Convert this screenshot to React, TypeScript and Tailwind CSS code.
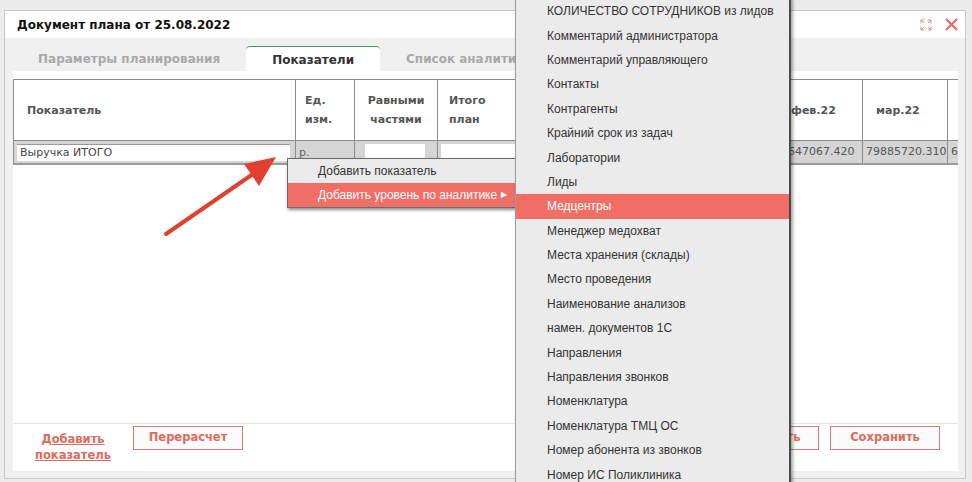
import { FC, ReactNode } from "react";

const analytics = [
  "КОЛИЧЕСТВО СОТРУДНИКОВ из лидов",
  "Комментарий администратора",
  "Комментарий управляющего",
  "Контакты",
  "Контрагенты",
  "Крайний срок из задач",
  "Лаборатории",
  "Лиды",
  "Медцентры",
  "Менеджер медохват",
  "Места хранения (склады)",
  "Место проведения",
  "Наименование анализов",
  "намен. документов 1С",
  "Направления",
  "Направления звонков",
  "Номенклатура",
  "Номенклатура ТМЦ ОС",
  "Номер абонента из звонков",
  "Номер ИС Поликлиника",
];

// columns hidden behind the submenu carry no label
const months = [
  { label: "", value: "" },
  { label: "", value: "" },
  { label: "", value: "" },
  { label: "фев.22", value: "6647067.420" },
  { label: "мар.22", value: "79885720.310" },
  { label: "", value: "66012345.000" },
];

const HeadCell: FC<{ className: string; children?: ReactNode }> = ({ className, children }) => (
  <div className={`flex h-full shrink-0 items-center border-r border-[#8c8c8c] ${className}`}>
    <div className="text-[11px] leading-[19px] font-bold text-[#555]">{children}</div>
  </div>
);

const OutlineButton: FC<{ children: ReactNode; className?: string }> = ({ children, className }) => (
  <button
    className={`h-[24px] w-[110px] border border-[#dd7a70] bg-[#fbfbfb] text-[11.5px] font-bold text-[#dd6a5e] ${className ?? ""}`}
  >
    {children}
  </button>
);

export default function App() {
  return (
    <div className="relative h-[482px] w-[972px] overflow-hidden bg-[#ececec] font-['DejaVu_Sans',sans-serif]">
      <div className="ml-[4px] mt-[10px] flex h-[469px] w-[962px] flex-col border border-[#c9c9c4] bg-[#f0f0f0]">
        {/* header */}
        <div className="flex h-[27px] shrink-0 items-center bg-white pl-[12px] pr-[7px]">
          <div className="text-[12px] font-bold text-[#111]">Документ плана от 25.08.2022</div>
          <div className="ml-auto flex items-center gap-[13px]">
            <svg width="12" height="12" viewBox="0 0 12 12" fill="none" stroke="#e8877e" strokeWidth="1">
              <path d="M1 4.5V1h3.5M1 1l3 3" />
              <path d="M11 4.5V1H7.5M11 1 8 4" />
              <path d="M1 7.5V11h3.5M1 11l3-3" />
              <path d="M11 7.5V11H7.5M11 11 8 8" />
            </svg>
            <svg width="13" height="13" viewBox="0 0 13 13" stroke="#e8675c" strokeWidth="2">
              <path d="M1 1l11 11M12 1 1 12" />
            </svg>
          </div>
        </div>

        {/* tabs */}
        <div className="flex h-[33px] shrink-0 items-end pl-[7px]">
          <div className="flex h-[25px] items-center px-[26px] text-[12px] font-bold text-[#a9a9a9]">
            Параметры планирования
          </div>
          <div className="flex h-[25px] items-center rounded-t-[4px] border-t border-[#3f9a5c] bg-white px-[26px] pt-[2px] text-[12px] font-bold text-[#333]">
            Показатели
          </div>
          <div className="flex h-[25px] items-center px-[26px] text-[12px] font-bold text-[#a9a9a9]">
            Список аналитик
          </div>
        </div>

        {/* content */}
        <div className="mb-[7px] ml-[8px] mr-[7px] flex flex-1 flex-col overflow-hidden bg-white">
          <div className="mt-[8px] flex flex-col overflow-hidden">
            <div className="flex w-max flex-col border-l border-t border-b-2 border-[#8c8c8c] border-b-[#9a9a9a]">
              <div className="flex h-[61px] border-b border-[#8c8c8c]">
                <HeadCell className="w-[282px] pl-[13px]">Показатель</HeadCell>
                <HeadCell className="w-[59px] pl-[9px]">
                  Ед.
                  <br />
                  изм.
                </HeadCell>
                <HeadCell className="w-[83px] justify-center text-center">
                  <div className="text-center">
                    Равными
                    <br />
                    частями
                  </div>
                </HeadCell>
                <HeadCell className="w-[85px] pl-[11px]">
                  Итого
                  <br />
                  план
                </HeadCell>
                {months.map((m, i) => (
                  <HeadCell key={i} className="w-[85px] pl-[13px]">
                    {m.label}
                  </HeadCell>
                ))}
              </div>
              <div className="flex h-[22px] bg-[#d5d5d5]">
                <div className="flex h-full w-[282px] shrink-0 items-center border-r border-[#8c8c8c] pl-[3px]">
                  <div className="flex h-[17px] w-[273px] items-center border-t border-[#9a9a9a] bg-white pl-[3px] pt-[2px] text-[11px] text-[#444]">
                    Выручка ИТОГО
                  </div>
                </div>
                <div className="flex h-full w-[59px] shrink-0 items-center border-r border-[#8c8c8c] pl-[3px] pt-[2px] text-[11px] text-[#666]">
                  р.
                </div>
                <div className="flex h-full w-[83px] shrink-0 items-center border-r border-[#8c8c8c] pl-[10px]">
                  <div className="h-[17px] w-[60px] bg-white" />
                </div>
                <div className="flex h-full w-[85px] shrink-0 items-center border-r border-[#8c8c8c] pl-[3px]">
                  <div className="h-[17px] w-[78px] bg-white" />
                </div>
                {months.map((m, i) => (
                  <div
                    key={i}
                    className="flex h-full w-[85px] shrink-0 items-center overflow-hidden whitespace-nowrap border-r border-[#8c8c8c] pl-[3px] pt-[1px] text-[11px] text-[#555]"
                  >
                    {m.value}
                  </div>
                ))}
              </div>
            </div>
          </div>

          <div className="flex-1" />

          {/* footer */}
          <div className="flex h-[48px] shrink-0 items-start border-t border-[#e4e4e4] pt-[2px]">
            <a className="ml-[22px] mt-[5px] text-center text-[11.5px] leading-[16px] font-bold text-[#dd6a5e] underline">
              Добавить
              <br />
              показатель
            </a>
            <OutlineButton className="ml-[22px]">Перерасчет</OutlineButton>
            <OutlineButton className="ml-auto">Применить</OutlineButton>
            <OutlineButton className="ml-[11px] mr-[18px]">Сохранить</OutlineButton>
          </div>
        </div>
      </div>

      {/* red pointer arrow */}
      <svg className="absolute left-0 top-0" width="300" height="260" viewBox="0 0 300 260">
        <line x1="166" y1="234" x2="253" y2="174" stroke="#e2402f" strokeWidth="4" strokeLinecap="round" />
        <polygon points="276,157 244,164 259,186" fill="#e2402f" />
      </svg>

      {/* context menu */}
      <div className="absolute left-[287px] top-[158px] w-[240px] border border-[#6a6a6a] bg-[#ebebeb] font-['Liberation_Sans',sans-serif] text-[12px] shadow-[1px_2px_3px_rgba(0,0,0,0.45)]">
        <div className="flex h-[24px] items-center pl-[30px] text-[#333]">Добавить показатель</div>
        <div className="flex h-[24px] items-center bg-[#f06e65] pl-[30px] text-white">
          Добавить уровень по аналитике
          <span className="ml-[4px] text-[8px]">▶</span>
        </div>
      </div>

      {/* submenu with analytics */}
      <div className="absolute left-[515px] top-[-1px] h-[486px] w-[276px] border-l border-r-2 border-[#9a9a9a] border-r-[#4a4a4a] bg-[#ebebeb] font-['Liberation_Sans',sans-serif] text-[12px] shadow-[2px_0_3px_rgba(0,0,0,0.35)]">
        {analytics.map((item) => (
          <div
            key={item}
            className={`flex h-[24.4px] items-center pl-[31px] ${
              item === "Медцентры" ? "bg-[#f06e65] text-white" : "text-[#333]"
            }`}
          >
            {item}
          </div>
        ))}
      </div>
    </div>
  );
}
